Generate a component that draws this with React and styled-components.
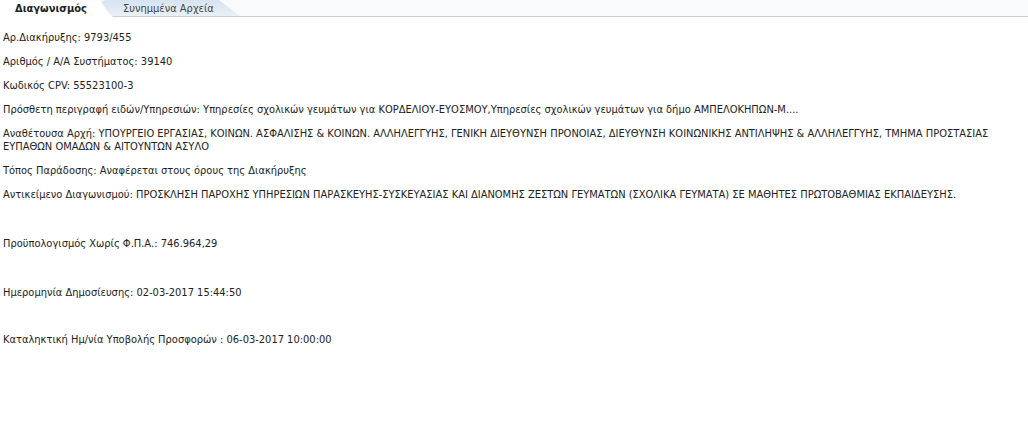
import React from "react";
import styled, { createGlobalStyle } from "styled-components";

const Global = createGlobalStyle`
  html, body { margin: 0; padding: 0; background: #fff; }
  body { font-family: "DejaVu Sans Condensed", "DejaVu Sans", Verdana, sans-serif; font-size: 11px; color: #222; }
`;

const TabBar = styled.div`
  display: flex;
  height: 16px;
  background: #f8fafc;
  border-bottom: 1px solid #c6cfd7;
  position: relative;
`;

const Tab = styled.div`
  position: relative;
  height: ${(p) => (p.$active ? "17px" : "16px")};
  display: flex;
  align-items: center;
  box-sizing: border-box;
  font-size: 11px;
  white-space: nowrap;
  z-index: ${(p) => (p.$active ? 2 : 1)};
  margin-left: ${(p) => (p.$active ? "0" : "-14px")};
  padding: ${(p) => (p.$active ? "0 26px 0 15px" : "0 26px 0 24px")};
  font-weight: ${(p) => (p.$active ? "bold" : "normal")};
  color: ${(p) => (p.$active ? "#222" : "#444")};
  background: ${(p) =>
    p.$active ? "#fff" : "linear-gradient(#d6e3f1, #e9f0f8)"};
  clip-path: ${(p) =>
    p.$active
      ? "polygon(0 0, calc(100% - 16px) 0, calc(100% - 12px) 2px, calc(100% - 4px) 13px, 100% 17px, 0 17px)"
      : "polygon(0 0, calc(100% - 21px) 0, 100% 100%, 0 100%)"};
  border-radius: ${(p) => (p.$active ? "0" : "8px 0 0 0")};
`;

const Content = styled.div`
  padding: 14px 3px 0 3px;
  width: 1020px;
  box-sizing: border-box;
`;

const Line = styled.p`
  margin: 0 0 11px 0;
  line-height: 13px;
`;

const Gap = styled.div`
  height: ${(p) => p.$h}px;
`;

export default function App() {
  return (
    <>
      <Global />
      <TabBar>
        <Tab $active>Διαγωνισμός</Tab>
        <Tab>Συνημμένα Αρχεία</Tab>
      </TabBar>
      <Content>
        <Line>Αρ.Διακήρυξης: 9793/455</Line>
        <Line>Αριθμός / Α/Α Συστήματος: 39140</Line>
        <Line>Κωδικός CPV: 55523100-3</Line>
        <Line>
          Πρόσθετη περιγραφή ειδών/Υπηρεσιών: Υπηρεσίες σχολικών γευμάτων για
          ΚΟΡΔΕΛΙΟΥ-ΕΥΟΣΜΟΥ,Υπηρεσίες σχολικών γευμάτων για δήμο
          ΑΜΠΕΛΟΚΗΠΩΝ-Μ....
        </Line>
        <Line>
          Αναθέτουσα Αρχή: ΥΠΟΥΡΓΕΙΟ ΕΡΓΑΣΙΑΣ, ΚΟΙΝΩΝ. ΑΣΦΑΛΙΣΗΣ & ΚΟΙΝΩΝ.
          ΑΛΛΗΛΕΓΓΥΗΣ, ΓΕΝΙΚΗ ΔΙΕΥΘΥΝΣΗ ΠΡΟΝΟΙΑΣ, ΔΙΕΥΘΥΝΣΗ ΚΟΙΝΩΝΙΚΗΣ
          ΑΝΤΙΛΗΨΗΣ & ΑΛΛΗΛΕΓΓΥΗΣ, ΤΜΗΜΑ ΠΡΟΣΤΑΣΙΑΣ ΕΥΠΑΘΩΝ ΟΜΑΔΩΝ & ΑΙΤΟΥΝΤΩΝ
          ΑΣΥΛΟ
        </Line>
        <Line>Τόπος Παράδοσης: Αναφέρεται στους όρους της Διακήρυξης</Line>
        <Line>
          Αντικείμενο Διαγωνισμού: ΠΡΟΣΚΛΗΣΗ ΠΑΡΟΧΗΣ ΥΠΗΡΕΣΙΩΝ
          ΠΑΡΑΣΚΕΥΗΣ-ΣΥΣΚΕΥΑΣΙΑΣ ΚΑΙ ΔΙΑΝΟΜΗΣ ΖΕΣΤΩΝ ΓΕΥΜΑΤΩΝ (ΣΧΟΛΙΚΑ ΓΕΥΜΑΤΑ)
          ΣΕ ΜΑΘΗΤΕΣ ΠΡΩΤΟΒΑΘΜΙΑΣ ΕΚΠΑΙΔΕΥΣΗΣ.
        </Line>
        <Gap $h={25} />
        <Line>Προϋπολογισμός Χωρίς Φ.Π.Α.: 746.964,29</Line>
        <Gap $h={25} />
        <Line>Ημερομηνία Δημοσίευσης: 02-03-2017 15:44:50</Line>
        <Gap $h={23} />
        <Line>Καταληκτική Ημ/νία Υποβολής Προσφορών : 06-03-2017 10:00:00</Line>
      </Content>
    </>
  );
}
